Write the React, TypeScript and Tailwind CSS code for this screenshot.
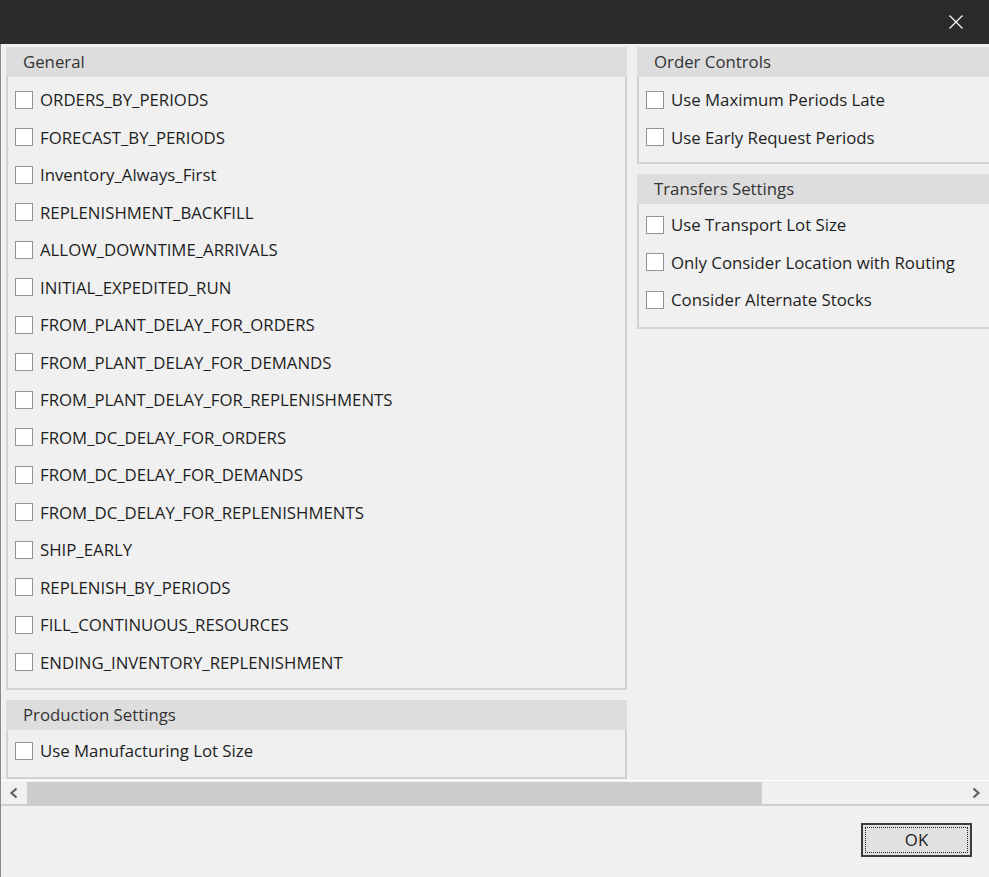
import type { ReactNode } from "react";

const generalOptions = [
  "ORDERS_BY_PERIODS",
  "FORECAST_BY_PERIODS",
  "Inventory_Always_First",
  "REPLENISHMENT_BACKFILL",
  "ALLOW_DOWNTIME_ARRIVALS",
  "INITIAL_EXPEDITED_RUN",
  "FROM_PLANT_DELAY_FOR_ORDERS",
  "FROM_PLANT_DELAY_FOR_DEMANDS",
  "FROM_PLANT_DELAY_FOR_REPLENISHMENTS",
  "FROM_DC_DELAY_FOR_ORDERS",
  "FROM_DC_DELAY_FOR_DEMANDS",
  "FROM_DC_DELAY_FOR_REPLENISHMENTS",
  "SHIP_EARLY",
  "REPLENISH_BY_PERIODS",
  "FILL_CONTINUOUS_RESOURCES",
  "ENDING_INVENTORY_REPLENISHMENT",
];

const orderOptions = ["Use Maximum Periods Late", "Use Early Request Periods"];

const transferOptions = [
  "Use Transport Lot Size",
  "Only Consider Location with Routing",
  "Consider Alternate Stocks",
];

function CheckRow({ label }: { label: string }) {
  return (
    <label className="flex h-[37.5px] items-center gap-[7px] pl-[7px]">
      <span className="size-[18px] shrink-0 border border-[#939393] bg-white" />
      <span className="whitespace-nowrap">{label}</span>
    </label>
  );
}

function Group({
  title,
  className,
  bodyClassName,
  children,
}: {
  title: string;
  className?: string;
  bodyClassName?: string;
  children: ReactNode;
}) {
  return (
    <section className={className}>
      <div className="flex h-[30px] items-center bg-[#dddddd] px-[17px] text-[#333]">{title}</div>
      <div className={`border-2 border-t-0 border-[#d2d2d2] ${bodyClassName ?? ""}`}>{children}</div>
    </section>
  );
}

export default function App() {
  return (
    <div className="flex h-[877px] w-[989px] flex-col overflow-hidden bg-[#f0f0f0] font-['Segoe_UI','Open_Sans',sans-serif] text-[16.8px] text-[#1e1e1e]">
      <div className="flex h-[44px] shrink-0 items-center justify-end bg-[#2b2b2b] pr-[26px]">
        <svg width="14" height="14" viewBox="0 0 14 14" className="text-white">
          <path d="M0.5 0.5 L13.5 13.5 M13.5 0.5 L0.5 13.5" stroke="currentColor" strokeWidth="1.2" />
        </svg>
      </div>

      <div className="flex flex-1 flex-col border-l border-[#8a8a8a]">
        <div className="h-[736px] overflow-hidden pt-[3px]">
          <div className="flex w-[1258px] gap-[10px] pl-[5px]">
            <div className="flex w-[621px] flex-col gap-[10px]">
              <Group title="General" bodyClassName="pt-[4px] pb-[7px]">
                {generalOptions.map((option) => (
                  <CheckRow key={option} label={option} />
                ))}
              </Group>
              <Group title="Production Settings" bodyClassName="pt-[2px] pb-[7px]">
                <CheckRow label="Use Manufacturing Lot Size" />
              </Group>
            </div>

            <div className="flex flex-1 flex-col gap-[10px]">
              <Group title="Order Controls" bodyClassName="pt-[4px] pb-[6px]">
                {orderOptions.map((option) => (
                  <CheckRow key={option} label={option} />
                ))}
              </Group>
              <Group title="Transfers Settings" bodyClassName="pt-[2px] pb-[8px]">
                {transferOptions.map((option) => (
                  <CheckRow key={option} label={option} />
                ))}
              </Group>
            </div>
          </div>
        </div>

        <div className="flex h-[26px] shrink-0 items-center border-t border-b-2 border-t-white border-b-[#cfcfcf] bg-[#f0f0f0]">
          <div className="flex h-full w-[26px] items-center justify-center">
            <svg width="10" height="12" viewBox="0 0 10 12" className="text-[#606060]">
              <path d="M7.5 1.5 L2.5 6 L7.5 10.5" fill="none" stroke="currentColor" strokeWidth="2.2" />
            </svg>
          </div>
          <div className="flex h-[22px] flex-1 items-center">
            <div className="h-full w-[735px] bg-[#cdcdcd]" />
          </div>
          <div className="flex h-full w-[26px] items-center justify-center">
            <svg width="10" height="12" viewBox="0 0 10 12" className="text-[#606060]">
              <path d="M2.5 1.5 L7.5 6 L2.5 10.5" fill="none" stroke="currentColor" strokeWidth="2.2" />
            </svg>
          </div>
        </div>

        <div className="flex flex-1 items-start justify-end pr-[17px] pt-[17px]">
          <button
            type="button"
            className="flex h-[34px] w-[111px] items-center justify-center border-2 border-[#3c3c3c] bg-[#e1e1e1] p-[2px]"
          >
            <span className="flex h-full w-full items-center justify-center border border-dotted border-[#222] text-[#1e1e1e]">
              OK
            </span>
          </button>
        </div>
      </div>
    </div>
  );
}
